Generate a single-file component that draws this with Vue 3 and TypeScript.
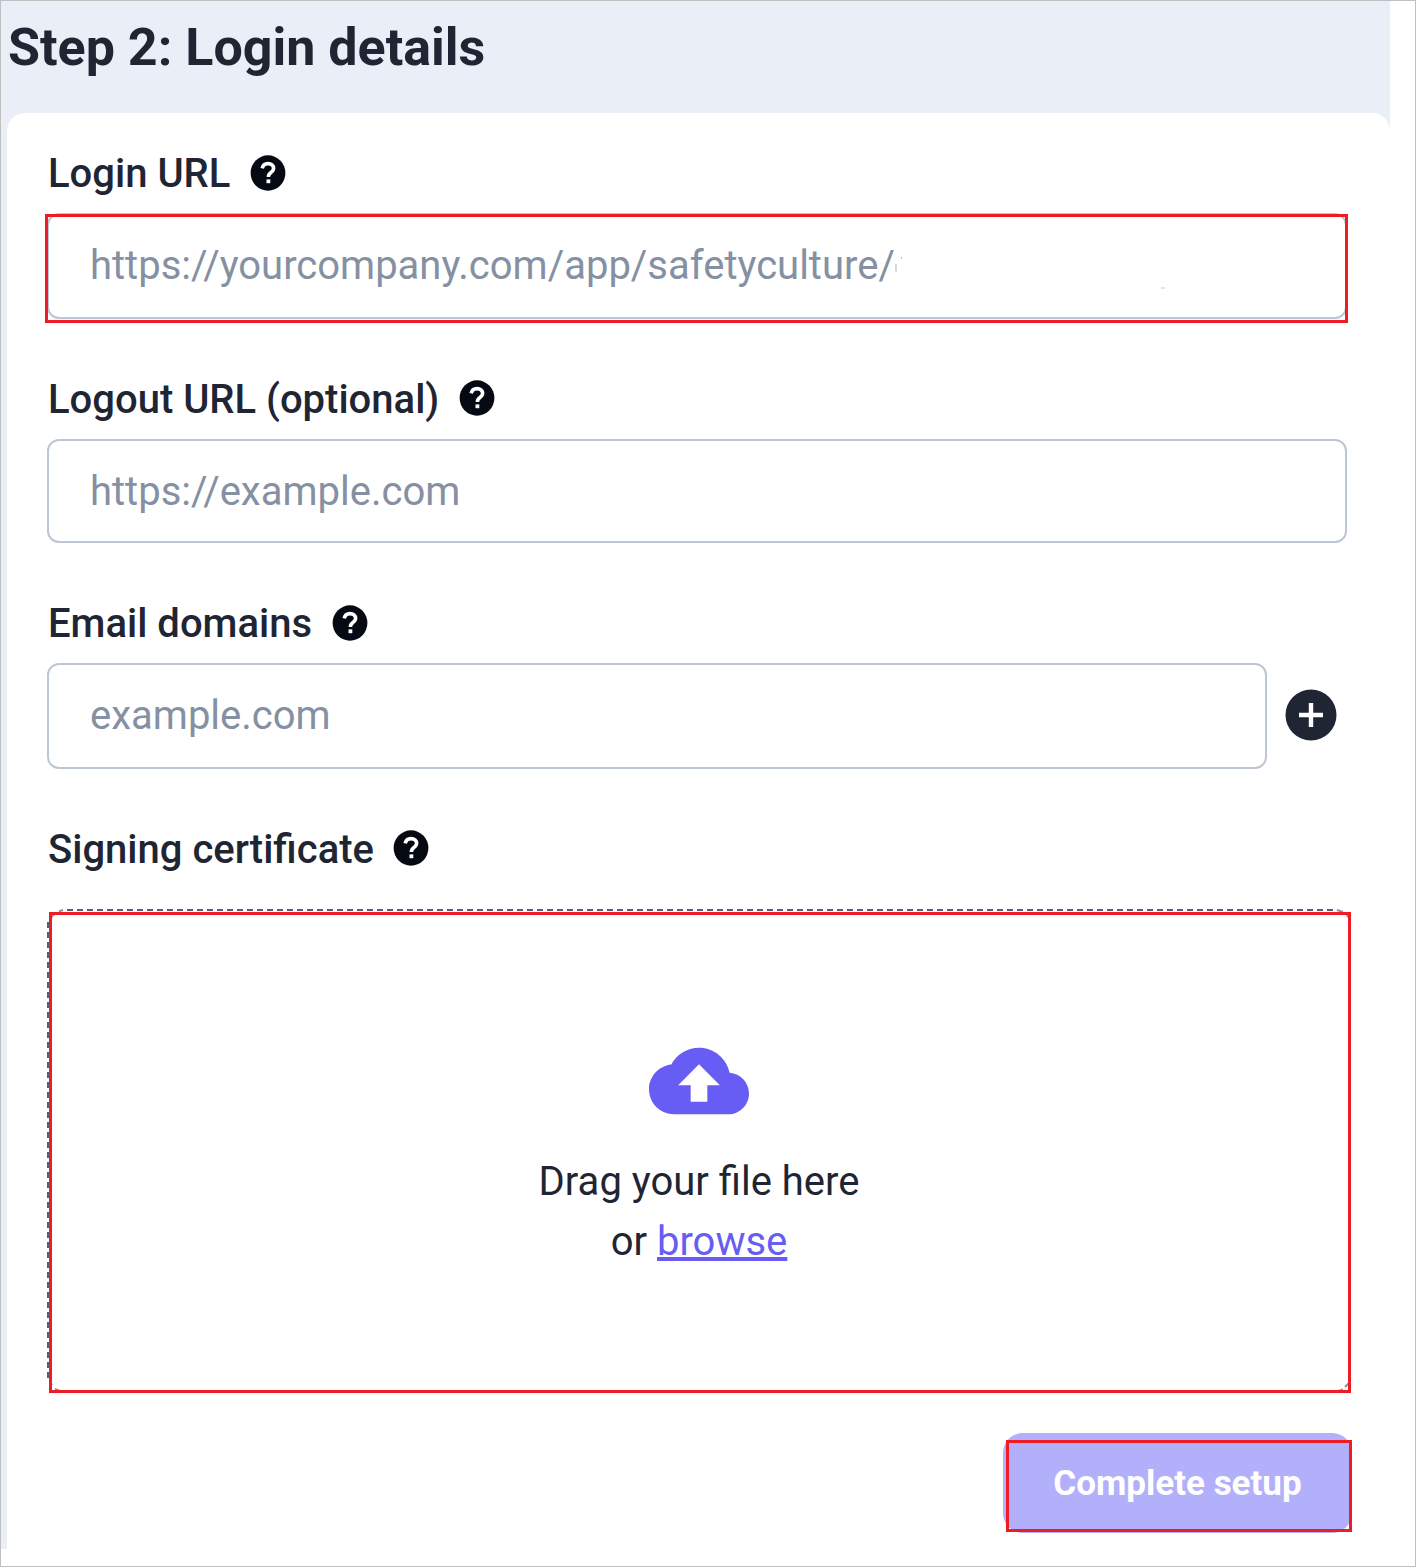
<script setup lang="ts">
interface Field {
  id: string
  label: string
  placeholder: string
  labelWidth: number
  addable?: boolean
  highlighted?: boolean
}

const fields: Field[] = [
  { id: 'login', label: 'Login URL', placeholder: 'https://yourcompany.com/app/safetyculture/', labelWidth: 203, highlighted: true },
  { id: 'logout', label: 'Logout URL (optional)', placeholder: 'https://example.com', labelWidth: 412 },
  { id: 'domains', label: 'Email domains', placeholder: 'example.com', labelWidth: 285, addable: true },
]
</script>

<template>
  <div class="frame">
    <div class="panel">
      <h1 class="title"><span>Step 2: Login details</span></h1>
      <main class="card">
        <section v-for="f in fields" :key="f.id" class="field" :class="f.id">
          <div class="label-row">
            <span class="label" :style="{ width: f.labelWidth + 'px' }">{{ f.label }}</span>
            <svg class="help" viewBox="0 0 36 36">
              <ellipse cx="18" cy="18" rx="17.4" ry="17.7" />
              <path class="hook" d="M12.2 13.4C12.8 10.4 15 8.6 18 8.6c3.3 0 5.6 1.9 5.6 4.7 0 2.3-1.4 3.3-2.9 4.4-1.4 1-2.3 1.9-2.3 4.4" />
              <rect x="16.5" y="24.4" width="3.8" height="3.8" />
            </svg>
          </div>
          <div class="input-row">
            <div class="input">
              <span class="placeholder">{{ f.placeholder }}</span>
              <template v-if="f.highlighted">
                <i class="speck speck-a"></i><i class="speck speck-b"></i><i class="speck speck-c"></i>
              </template>
            </div>
            <svg v-if="f.addable" class="add" viewBox="0 0 52 52">
              <circle cx="26" cy="26" r="25.5" />
              <path d="M26 14v24M14 26h24" />
            </svg>
          </div>
          <div v-if="f.highlighted" class="mark mark-login"></div>
        </section>

        <section class="field certificate">
          <div class="label-row">
            <span class="label certificate-label">Signing certificate</span>
            <svg class="help" viewBox="0 0 36 36">
              <ellipse cx="18" cy="18" rx="17.4" ry="17.7" />
              <path class="hook" d="M12.2 13.4C12.8 10.4 15 8.6 18 8.6c3.3 0 5.6 1.9 5.6 4.7 0 2.3-1.4 3.3-2.9 4.4-1.4 1-2.3 1.9-2.3 4.4" />
              <rect x="16.5" y="24.4" width="3.8" height="3.8" />
            </svg>
          </div>
          <div class="drop">
            <svg class="dashes" viewBox="0 0 1304 484">
              <path d="M20 1H1288" stroke-dasharray="6 4" />
              <path d="M1 13V470" stroke-dasharray="6 4" />
              <path class="corner" d="M3 10Q5 6 9 4M12 2.5L16 1M1290 1L1296 3M1299 5L1302 9M3 473L5 476M8 480L13 482M1291 482L1296 480.500M1298 478L1302 474" />
            </svg>
            <svg class="cloud" viewBox="0 0 24 24">
              <path d="M19.35 10.04C18.67 6.59 15.64 4 12 4 9.11 4 6.6 5.64 5.35 8.04 2.34 8.36 0 10.91 0 14c0 3.31 2.69 6 6 6h13c2.76 0 5-2.24 5-5 0-2.64-2.05-4.78-4.65-4.96zM14 13v4h-4v-4H7l5-5 5 5h-3z" />
            </svg>
            <p class="drag">Drag your file here</p>
            <p class="or">or <a>browse</a></p>
            <div class="mark mark-drop"></div>
          </div>
        </section>

        <div class="actions">
          <button type="button">
            <span>Complete setup</span>
            <i class="mark mark-button"></i>
          </button>
        </div>
      </main>
    </div>
  </div>
</template>

<style>
body {
  margin: 0;
  background: #fff;
}
</style>

<style scoped>
* {
  box-sizing: border-box;
}
.frame {
  width: 1416px;
  height: 1567px;
  border: 1px solid #c0c0c0;
  background: #fff;
  font-family: Roboto, sans-serif;
  color: #1f2533;
  overflow: hidden;
}
.panel {
  width: 1389px;
  height: 1548px;
  background: #e9eef7;
}
.title {
  margin: 0;
  height: 112px;
  padding: 16px 0 0 7px;
  font-size: 52px;
  line-height: 62px;
  font-weight: 700;
  letter-spacing: 0;
  white-space: nowrap;
}
.card {
  height: 1436px;
  margin-left: 6px;
  padding: 36px 0 0 40px;
  background: #fff;
  border-radius: 18px 18px 0 0;
}
.field {
  position: relative;
  height: 226px;
}
.field.logout {
  height: 224px;
}
.label-row {
  display: flex;
  height: 64px;
}
.label {
  flex: none;
  padding: 1px 0 0 1px;
  font-size: 40px;
  line-height: 48px;
  font-weight: 500;
  white-space: nowrap;
}
.certificate-label {
  width: 346px;
}
.help {
  width: 36px;
  height: 36px;
  margin-top: 6px;
  flex: none;
  fill: #050a12;
}
.logout .help,
.certificate .help {
  margin-top: 5px;
}
.help .hook {
  fill: none;
  stroke: #fff;
  stroke-width: 3.6;
}
.help rect {
  fill: #fff;
}
.input-row {
  display: flex;
  align-items: center;
}
.input {
  position: relative;
  width: 1300px;
  height: 106px;
  padding: 27px 0 0 41px;
  border: 2px solid #bdc6d5;
  border-radius: 12px;
  font-size: 40px;
  line-height: 48px;
  color: #8590a3;
  white-space: nowrap;
}
.logout .input {
  height: 104px;
}
.domains .input {
  width: 1220px;
}
.add {
  width: 52px;
  height: 52px;
  margin: 0 0 2px 18px;
  fill: #1f2533;
}
.add path {
  stroke: #fff;
  stroke-width: 4.4;
}
.mark {
  position: absolute;
  border: 3px solid #ee1c25;
}
.mark-login {
  left: -2px;
  top: 65px;
  width: 1303px;
  height: 109px;
}
.speck {
  position: absolute;
}
.speck-a {
  left: 846px;
  top: 49px;
  width: 2px;
  height: 8px;
  background: #d6dae1;
}
.speck-b {
  left: 852px;
  top: 42px;
  width: 1px;
  height: 2px;
  background: #b8bec9;
}
.speck-c {
  left: 1112px;
  top: 72px;
  width: 4px;
  height: 2px;
  background: #e3e4e7;
}
.certificate {
  height: 568px;
}
.certificate .label-row {
  height: 84px;
}
.drop {
  position: relative;
  width: 1304px;
  height: 484px;
  padding-top: 122px;
  display: flex;
  flex-direction: column;
  align-items: center;
}
.dashes {
  position: absolute;
  left: 0;
  top: 0;
  width: 1304px;
  height: 484px;
  fill: none;
  stroke: #566071;
  stroke-width: 2;
}
.dashes .corner {
  stroke: #8b929e;
}
.cloud {
  width: 100px;
  height: 100px;
  fill: #675df4;
}
.drag,
.or {
  margin: 0;
  font-size: 40px;
  line-height: 60px;
  white-space: nowrap;
}
.drag {
  margin-top: 21px;
}
.or a {
  color: #675df4;
  text-decoration: underline;
  text-decoration-thickness: 4px;
  text-underline-offset: 2px;
  text-decoration-skip-ink: none;
}
.mark-drop {
  left: 2px;
  top: 3px;
  width: 1302px;
  height: 481px;
}
.actions {
  display: flex;
  justify-content: flex-end;
  padding: 40px 38px 0 0;
}
.actions button {
  position: relative;
  width: 349px;
  height: 100px;
  padding: 1px 0 0;
  border: 0;
  border-radius: 20px;
  background: #b3b0fb;
  color: #fff;
  font: 700 35px/48px Roboto, sans-serif;
  white-space: nowrap;
}
.mark-button {
  left: 3px;
  top: 7px;
  width: 346px;
  height: 92px;
}
</style>
